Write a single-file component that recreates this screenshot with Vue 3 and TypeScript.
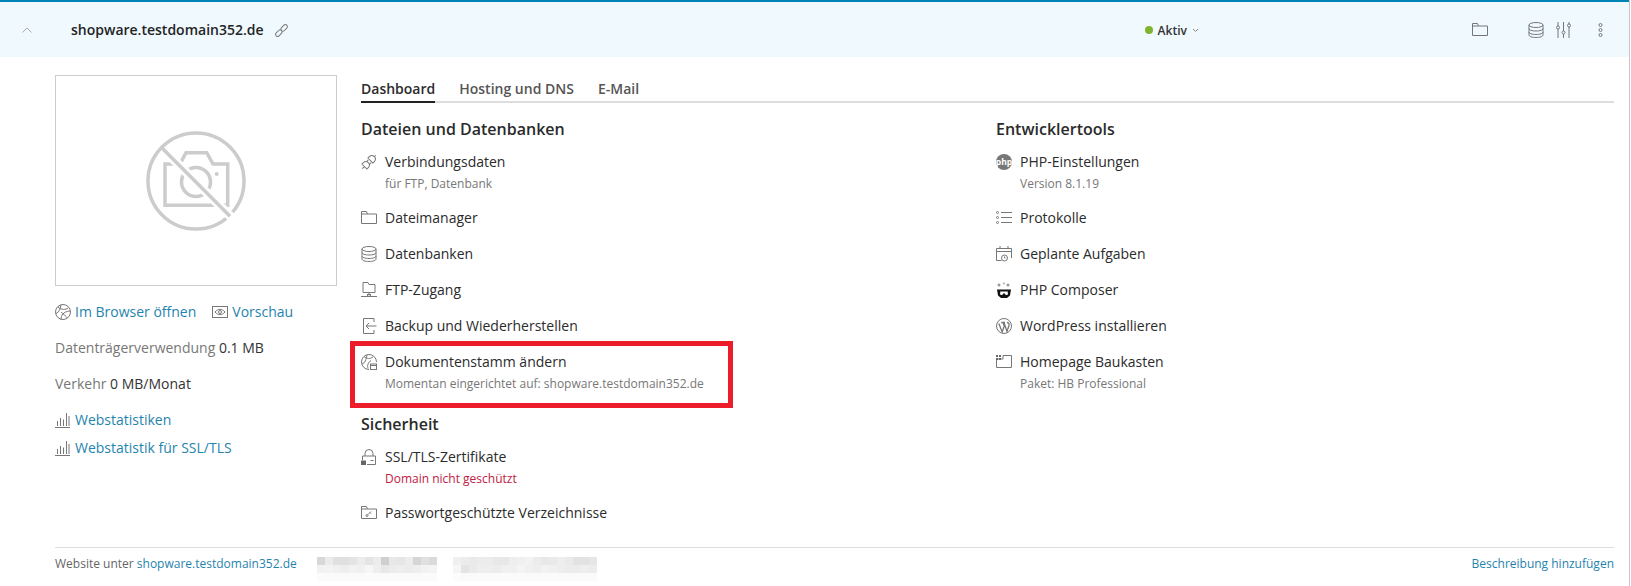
<script setup lang="ts">
const a: number[] = [
  216, 235, 224, 224, 228, 236, 228, 236, 207, 232, 230, 236, 214, 224, 218,
  242, 243, 240, 238, 242, 240, 246, 238, 232, 236, 238, 236, 238, 242, 244,
  251, 250, 250, 250, 250, 250, 251, 250, 250, 250, 250, 250, 250, 251, 251,
]
const b: number[] = [
  240, 236, 234, 236, 236, 232, 232, 238, 240, 242, 236, 232, 234, 238, 234, 226, 226, 230,
  246, 228, 234, 238, 238, 236, 240, 240, 244, 240, 238, 242, 240, 238, 236, 236, 238, 236,
  252, 250, 250, 250, 250, 250, 251, 250, 250, 250, 250, 250, 251, 250, 250, 250, 250, 250,
]
const gray = (n: number): string => `rgb(${n}, ${n}, ${n})`
</script>

<template>
  <div class="page">
    <header class="head">
      <svg class="chev" width="10" height="6" viewBox="0 0 10 6"><path d="M.5 5.500 5 1l4.500 4.500" /></svg>
      <b class="name">shopware.testdomain352.de</b>
      <svg class="ic link" width="13" height="13" viewBox="0 0 13 13"><g transform="rotate(-45 6.500 6.500)"><rect x="-1" y="4.500" width="7.500" height="4" rx="2" /><rect x="6.500" y="4.500" width="7.500" height="4" rx="2" /></g></svg>
      <div class="status"><i class="dot"></i><b>Aktiv</b><svg class="down" width="7" height="5" viewBox="0 0 7 5"><path d="M1 1l2.500 2.500L6 1" /></svg></div>
      <div class="tools">
        <svg class="ic t1" width="16" height="13" viewBox="0 0 16 13"><path d="M.5 12.500V.5h5l1 2.500h9v9.500z" /><path d="M.5 3h6" /></svg>
        <svg class="ic t2" width="16" height="16" viewBox="0 0 16 16"><ellipse cx="8" cy="3" rx="7" ry="2.500" /><path d="M1 3v10c0 1.400 3 2.500 7 2.500s7-1.100 7-2.500V3M1 6.500C1 8 4 9 8 9s7-1 7-2.500M1 10c0 1.400 3 2.500 7 2.500s7-1.100 7-2.500" /></svg>
        <svg class="ic t3" width="15" height="16" viewBox="0 0 15 16"><path d="M2 0v4M2 7v9M7.500 0v9M7.500 12v4M13 0v2M13 5v11" /><circle cx="2" cy="5.500" r="1.500" /><circle cx="7.500" cy="10.500" r="1.500" /><circle cx="13" cy="3.500" r="1.500" /></svg>
        <svg class="ic t4" width="5" height="14" viewBox="0 0 5 14"><circle cx="2.500" cy="2" r="1.500" /><circle cx="2.500" cy="7" r="1.500" /><circle cx="2.500" cy="12" r="1.500" /></svg>
      </div>
    </header>

    <main class="body">
      <aside class="side">
        <div class="thumb">
          <svg width="100" height="100" viewBox="0 0 100 100" class="noimg">
            <circle cx="50" cy="50" r="48" />
            <path d="M19 34.500V74.300H81.700V33H67L60.700 21.700H40L34 33H19z" />
            <circle cx="50" cy="51" r="14.500" />
            <circle cx="70.700" cy="43" r="2" class="fill" />
            <path class="gap" d="M20 21 89 90" />
            <path d="M15 16 84 85.300" />
          </svg>
        </div>
        <div class="linkrow">
          <a><svg class="ic" width="16" height="16" viewBox="0 0 16 16"><circle cx="8" cy="8" r="7.500" /><path d="M3 3c3 3 8 3 10 1M1 9.500c3-1 4-4 5-8.500M6 15.500c0-4 2-8 9-8.500M6 8c2 2 5 4 6.500 6" /></svg>Im Browser öffnen</a>
          <a><svg class="ic" width="16" height="12" viewBox="0 0 16 12"><rect x=".5" y=".5" width="15" height="11" /><path d="M3 6c3-3.500 7-3.500 10 0-3 3.500-7 3.500-10 0z" /><circle cx="8" cy="6" r="1.500" /></svg>Vorschau</a>
        </div>
        <p class="stat">Datenträgerverwendung <span>0.1 MB</span></p>
        <p class="stat">Verkehr <span>0 MB/Monat</span></p>
        <a class="web"><svg class="ic" width="15" height="15" viewBox="0 0 15 15"><path d="M0 14.500h15M2.500 13V8M5.500 13V5M8.500 13V6.500M11.500 13V0M14 13V3" /></svg>Webstatistiken</a>
        <a class="web"><svg class="ic" width="15" height="15" viewBox="0 0 15 15"><path d="M0 14.500h15M2.500 13V8M5.500 13V5M8.500 13V6.500M11.500 13V0M14 13V3" /></svg>Webstatistik für SSL/TLS</a>
      </aside>

      <section class="content">
        <nav class="tabs">
          <a class="on">Dashboard</a><a>Hosting und DNS</a><a>E-Mail</a>
        </nav>
        <div class="cols">
          <div class="col">
            <h3>Dateien und Datenbanken</h3>
            <div class="item"><svg class="ic" width="16" height="16" viewBox="0 0 16 16"><g transform="rotate(-45 8 8)"><path d="M-1.500 8H1.500M1.500 4.500H3.500A3.500 3.500 0 0 1 3.500 11.500H1.500zM7 6H9M7 10H9M10 4.500H12A3.500 3.500 0 0 1 12 11.500H10z" /><path d="M15.500 8H17.500" /></g></svg><div><div class="t">Verbindungsdaten</div><div class="s">für FTP, Datenbank</div></div></div>
            <div class="item"><svg class="ic m3" width="16" height="13" viewBox="0 0 16 13"><path d="M.5 12.500V.5h5l1 2.500h9v9.500z" /><path d="M.5 3h6" /></svg><div class="t">Dateimanager</div></div>
            <div class="item"><svg class="ic" width="16" height="16" viewBox="0 0 16 16"><ellipse cx="8" cy="3" rx="7" ry="2.500" /><path d="M1 3v10c0 1.400 3 2.500 7 2.500s7-1.100 7-2.500V3M1 6.500C1 8 4 9 8 9s7-1 7-2.500M1 10c0 1.400 3 2.500 7 2.500s7-1.100 7-2.500" /></svg><div class="t">Datenbanken</div></div>
            <div class="item"><svg class="ic" width="16" height="16" viewBox="0 0 16 16"><path d="M2 10.500V.5h5l1 2h6v8zM8 10.500v3M0 14.500h16" /><rect x="6.500" y="12.500" width="3" height="2" /></svg><div class="t">FTP-Zugang</div></div>
            <div class="item"><svg class="ic" width="16" height="16" viewBox="0 0 16 16"><path d="M13 4V.5H2.500v15H13V12M15.500 8H5M8 5 5 8l3 3" /></svg><div class="t">Backup und Wiederherstellen</div></div>
            <div class="item"><svg class="ic" width="16" height="16" viewBox="0 0 16 16"><path d="M8 15.500A7.500 7.500 0 1 1 15.500 8" /><path d="M3 2.500c3 2.500 6 2.500 9 .5M1 10c3-1 4-4 5-9M7 14.500c-1-3 0-6 3-8" /><rect x="9.500" y="10" width="6" height="5.500" /><path d="M9.500 11.500h6" /></svg><div><div class="t">Dokumentenstamm ändern</div><div class="s">Momentan eingerichtet auf: shopware.testdomain352.de</div></div></div>
            <h3 class="h2">Sicherheit</h3>
            <div class="item"><svg class="ic" width="16" height="16" viewBox="0 0 16 16"><path d="M4 7V4.500a4 4 0 0 1 8 0V7M1.500 7h13v8.500H6M1.500 7v4M9.500 11.500h3" /><rect x="0" y="11.500" width="5" height="4.500" class="fill" /></svg><div><div class="t">SSL/TLS-Zertifikate</div><div class="s red">Domain nicht geschützt</div></div></div>
            <div class="item"><svg class="ic m3" width="16" height="13" viewBox="0 0 16 13"><path d="M.5 12.500V.5h5l1 2.500h9v9.500z" /><path d="M.5 3h6M7 8.500l3-3M9 6.500l1 1" /><circle cx="6" cy="9.500" r="1" /></svg><div class="t">Passwortgeschützte Verzeichnisse</div></div>
          </div>
          <div class="col">
            <h3>Entwicklertools</h3>
            <div class="item"><svg class="php" width="16" height="16" viewBox="0 0 16 16"><circle cx="8" cy="8" r="8" /><text x="8" y="10.500" text-anchor="middle">php</text></svg><div><div class="t">PHP-Einstellungen</div><div class="s">Version 8.1.19</div></div></div>
            <div class="item"><svg class="ic m3" width="16" height="13" viewBox="0 0 16 13"><circle cx="1.500" cy="1.500" r="1" /><circle cx="1.500" cy="6.500" r="1" /><circle cx="1.500" cy="11.500" r="1" /><path d="M5 1.500h11M5 6.500h11M5 11.500h11" /></svg><div class="t">Protokolle</div></div>
            <div class="item"><svg class="ic" width="16" height="16" viewBox="0 0 16 16"><path d="M5.500 14.500h-5v-12h15V12M.5 5.500h15M4 0v3M12 0v3" /><circle cx="8.500" cy="12" r="3" /><path d="M8.500 10.500V12h1" /></svg><div class="t">Geplante Aufgaben</div></div>
            <div class="item"><svg width="16" height="16" viewBox="0 0 16 16"><path class="blk" d="M1 7.500h14l-1 6-3 2.500H5l-3-2.500z" /><path d="M4 9.500h8l-1 2H5z" fill="#fff" /><circle cx="5.500" cy="11.500" r="1.500" fill="#fff" /><circle cx="10.500" cy="11.500" r="1.500" fill="#fff" /><circle cx="3" cy="3" r="1.500" fill="#999" /><circle cx="8" cy="1.500" r="1" fill="#aaa" /><circle cx="12" cy="3" r="1.500" fill="#999" /></svg><div class="t">PHP Composer</div></div>
            <div class="item"><svg class="ic" width="16" height="16" viewBox="0 0 16 16"><circle cx="8" cy="8" r="7.500" /><path d="M2.800 5.500 6.200 14 8.300 8 6.800 4.300M5.200 4.500H9M7.800 4.300 11 13.500 13 7.500C13.500 6 12.500 4.500 11 4.500" stroke-width="1.300" /></svg><div class="t">WordPress installieren</div></div>
            <div class="item"><svg class="ic m3" width="16" height="13" viewBox="0 0 16 13"><path d="M.5 3v9.500h15V.5H7v3.500H.5" /><rect x="0" y="0" width="2" height="2" class="fill" /><rect x="3" y="0" width="2" height="2" class="fill" /><rect x="0" y="3" width="2" height="2" class="fill" /><rect x="3" y="3" width="2" height="2" class="fill" /></svg><div><div class="t">Homepage Baukasten</div><div class="s">Paket: HB Professional</div></div></div>
          </div>
        </div>
      </section>
      <div class="mark"></div>
    </main>

    <footer class="foot">
      <div class="inner">
        <span class="w">Website unter <a>shopware.testdomain352.de</a></span>
        <div class="blur b1"><i v-for="(n, i) in a" :key="i" :style="{ background: gray(n) }"></i></div>
        <div class="blur b2"><i v-for="(n, i) in b" :key="i" :style="{ background: gray(n) }"></i></div>
        <a class="add">Beschreibung hinzufügen</a>
      </div>
    </footer>
  </div>
</template>

<style>
html, body { margin: 0; background: #fff; }
</style>

<style scoped>
.page { width: 1630px; height: 586px; overflow: hidden; position: relative; font-family: "Open Sans", sans-serif; font-size: 14px; color: #2b2b2b; background: #fff; box-sizing: border-box; border-right: 1px solid #c8c8c8; }
a { color: #1f84ad; }
.ic { fill: none; stroke: #777; stroke-width: 1; flex: none; overflow: visible; }
.ic .fill { fill: #666; stroke: none; }
.head { height: 57px; box-sizing: border-box; border-top: 2px solid #0083b5; background: #eff9fe; display: flex; align-items: center; padding-left: 22px; }
.chev { fill: none; stroke: #aaa; stroke-width: 1; flex: none; }
.name { margin-left: 39px; font-weight: 600; font-size: 14px; color: #242424; }
.link { margin-left: 11px; margin-top: 2px; }
.status { margin-left: 857px; display: flex; align-items: center; font-size: 12px; margin-top: 1px; }
.status b { font-weight: 600; color: #333; }
.dot { width: 8px; height: 8px; border-radius: 50%; background: #7fb42e; margin-right: 5px; }
.down { margin-left: 5px; fill: none; stroke: #888; stroke-width: 1; }
.tools { display: flex; align-items: center; }
.t1 { margin-left: 273px; }
.t2 { margin-left: 40px; }
.t3 { margin-left: 12px; }
.t4 { margin-left: 27px; }
.body { display: flex; position: relative; height: 490px; box-sizing: border-box; padding: 18px 0 0 55px; }
.side { width: 282px; flex: none; }
.thumb { height: 211px; box-sizing: border-box; border: 1px solid #ccc; display: flex; align-items: center; justify-content: center; }
.noimg { fill: none; stroke: #ccc; stroke-width: 3.500; }
.noimg .fill { fill: #ccc; stroke: none; }
.noimg .gap { stroke: #fff; stroke-width: 9; }
.linkrow { display: flex; gap: 16px; margin-top: 16px; line-height: 20px; }
.linkrow a { display: flex; align-items: center; gap: 4px; }
.stat { margin: 16px 0 0; line-height: 20px; color: #777; }
.stat span { color: #333; }
.web { display: flex; align-items: center; gap: 5px; line-height: 20px; margin-top: 8px; }
.stat + .web { margin-top: 16px; }
.content { margin-left: 24px; width: 1253px; }
.tabs { display: flex; gap: 24px; height: 28px; box-sizing: border-box; border-bottom: 2px solid #ddd; font-weight: 600; line-height: 27px; }
.tabs a { color: #555; }
.tabs a.on { color: #2b2b2b; height: 28px; box-sizing: border-box; border-bottom: 2px solid #222; }
.cols { display: flex; }
.col { width: 635px; flex: none; }
.col + .col { width: 618px; }
h3 { margin: 15px 0 12px; font-size: 16px; font-weight: 600; line-height: 22px; color: #2b2b2b; }
h3.h2 { margin-top: 5px; }
.item { display: flex; gap: 8px; padding-bottom: 16px; }
.item > svg { margin-top: 2px; width: 16px; }
.item > svg.m3 { margin-top: 3px; }
.t { line-height: 20px; }
.s { font-size: 12px; line-height: 16px; margin-top: 4px; color: #777; }
.s.red { color: #c0203f; }
.php circle { fill: #777; }
.php text { fill: #fff; font-family: "Open Sans", sans-serif; font-size: 8.500px; font-weight: 700; }
.blk { fill: #111; }
.mark { position: absolute; left: 350px; top: 284px; width: 383px; height: 67px; box-sizing: border-box; border: 5px solid #ed1c2a; }
.foot { position: absolute; left: 55px; top: 547px; width: 1559px; }
.inner { border-top: 1px solid #ddd; display: flex; align-items: center; height: 31px; font-size: 12px; color: #666; position: relative; }
.add { margin-left: auto; }
.blur { position: absolute; top: 9px; height: 24px; display: grid; grid-auto-rows: 8px; }
.b1 { left: 262px; width: 120px; grid-template-columns: repeat(15, 8px); }
.b2 { left: 398px; width: 144px; grid-template-columns: repeat(18, 8px); }
</style>
